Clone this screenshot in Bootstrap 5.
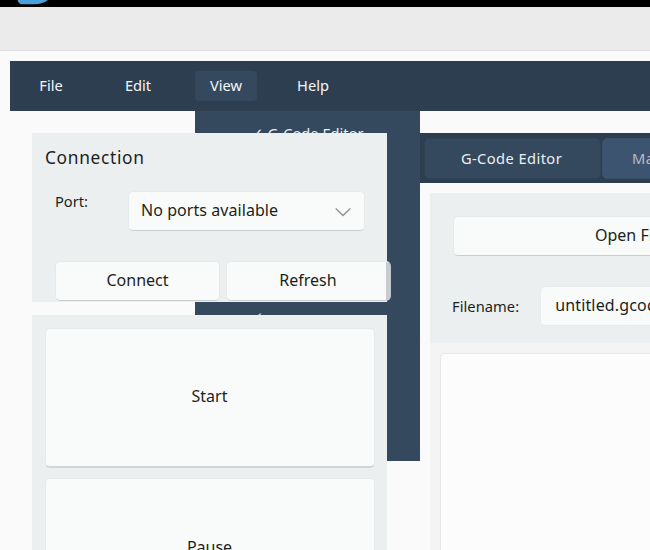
<!DOCTYPE html>
<html lang="en">
<head>
<meta charset="utf-8">
<meta name="viewport" content="width=device-width, initial-scale=1">
<title>G-Code Editor</title>
<link href="https://cdn.jsdelivr.net/npm/bootstrap@5.3.0/dist/css/bootstrap.min.css" rel="stylesheet">
<style>
body{font-family:"Noto Sans",sans-serif;font-size:16px;line-height:22px;color:#1c1f20;background:#fafafa;width:650px;height:550px}
.sysbar{height:7px;background:#000}
.sysbar svg{display:block;margin-left:17px}
.titlestrip{height:44px;background:#ebebeb;border-bottom:1px solid #dcdcdc}
.menubar{height:50px;margin:10px 0 0 10px;background:#2c3e50;padding-left:10px;gap:25px;z-index:3}
.menubar .nav-link{width:62px;height:30px;line-height:28px;padding:0;text-align:center;color:#f4f6f7;font-size:14.67px;border-radius:4px}
.menubar .nav-link.active{background:#34495e;margin-left:1px}
.menu-anchor{margin-left:10px;height:0}
.viewmenu{top:0;left:185px;width:225px;height:350px;background:#34495e;color:#ecf0f1;font-size:14.67px;z-index:1}
.viewmenu div{height:61.33px;padding:11px 0 0 56px;white-space:nowrap}
.work{padding:22px 0 0 32px;gap:33px;height:439px}
.side{width:355px;z-index:4}
.panel{background:#ebeff0}
.ctl{background:#f9fbfa;border:1px solid #e6eaeb;border-bottom-color:#cbcfd0;border-radius:5px;color:#1c1f20;padding:0 0 2px;font-size:16px;line-height:22px}
.conn{height:168.5px;padding:12px 0 0 13px}
.conn h2{font-size:17.33px;line-height:24px;letter-spacing:.67px;font-weight:400}
.small-label{font-size:14.67px;line-height:20px}
.portrow{margin:22px 0 0 10px}
.port{width:237px;height:40px;margin-left:40px;padding:0 13px 2px 12px;letter-spacing:.06px}
.port svg{margin-top:3px}
.actions{margin:30px 0 0 10px;gap:7px}
.actions .ctl{width:165px;height:40px;flex:none;padding-bottom:3px}
.actions .refresh{margin-left:-1px;padding-right:1px;background:linear-gradient(90deg,#f9fbfa 160px,#c6ccd0 160px);background-origin:border-box;border-right-color:#c0c7cc}
.run{margin-top:13.5px;height:235px;padding:13px 12px 0 13px;gap:10px}
.run .ctl{height:140px;flex:none;border-bottom-width:2px;border-bottom-color:#d0d5d5;padding:0 1px 3px 0}
.run .ctl + .ctl{padding-bottom:2px}
.main{width:230px;flex:none}
.tabs{height:50px;background:#2c3e50;padding:5px 0 0 4px;gap:1px}
.tabs .nav-link{height:41px;line-height:38px;width:177px;flex:none;padding:0 2px 0 0;text-align:center;background:#34495e;border:1px solid #304457;border-radius:5px;color:#ecf0f1;font-size:14.67px;letter-spacing:.42px}
.tabs .nav-link.other{background:#3d5470;color:#b4bdc7;border-color:#3a4f68;text-align:left;padding-left:29px}
.filebox{margin:10px 0 0 10px;height:150px;padding:23px 0 0 23px}
.open{width:355px;height:40px;flex:none}
.namerow{margin:30px 0 0 -1px}
.namerow label{margin-right:21px;letter-spacing:.06px}
.namefield{width:240px;height:40px;padding-left:14px;border-color:#e8eced;letter-spacing:.15px;flex:none}
.editor{margin-left:10px;height:207px;background:#f4f4f4;padding:10px 0 0 10px}
.editor textarea{display:block;width:300px;height:260px;background:#fcfcfc;border:1px solid #e8e8e8;border-radius:5px;resize:none}
</style>
<script src="https://cdn.jsdelivr.net/npm/bootstrap@5.3.0/dist/js/bootstrap.bundle.min.js"></script>
</head>
<body class="overflow-hidden">
<div class="sysbar overflow-hidden"><svg width="32" height="5" viewBox="0 0 32 5"><path d="M.5 0H31Q25 4.3 17 4.3H5Q1.500 4 .5 0Z" fill="#4ba0dc"/></svg></div>
<div class="titlestrip"></div>
<nav class="menubar nav d-flex flex-nowrap align-items-center position-relative">
  <a class="nav-link">File</a>
  <a class="nav-link">Edit</a>
  <a class="nav-link active">View</a>
  <a class="nav-link">Help</a>
</nav>
<div class="menu-anchor position-relative"><div class="viewmenu position-absolute">
  <div>✓ G-Code Editor</div><div></div><div></div><div>✓</div>
</div></div>
<main class="work d-flex overflow-hidden">
  <aside class="side position-relative flex-shrink-0">
    <section class="panel conn">
      <h2 class="mb-0">Connection</h2>
      <div class="portrow d-flex">
        <label class="small-label">Port:</label>
        <div class="port ctl d-flex align-items-center justify-content-between"><span>No ports available</span>
          <svg width="16" height="10" viewBox="0 0 16 10" fill="none" stroke="#8f9394" stroke-width="1.4"><path d="M.7 1.500 8 8.500 15.300 1.500"/></svg></div>
      </div>
      <div class="actions d-flex"><button class="btn ctl">Connect</button><button class="btn ctl refresh">Refresh</button></div>
    </section>
    <section class="panel run d-flex flex-column overflow-hidden"><button class="btn ctl">Start</button><button class="btn ctl">Pause</button></section>
  </aside>
  <section class="main">
    <nav class="tabs nav d-flex flex-nowrap"><a class="nav-link">G-Code Editor</a><a class="nav-link other">Macros</a></nav>
    <div class="panel filebox">
      <button class="btn ctl open">Open File</button>
      <div class="namerow d-flex align-items-center"><label class="small-label">Filename:</label><div class="ctl namefield d-flex align-items-center">untitled.gcode</div></div>
    </div>
    <div class="editor"><textarea aria-label="Program"></textarea></div>
  </section>
</main>
</body>
</html>
